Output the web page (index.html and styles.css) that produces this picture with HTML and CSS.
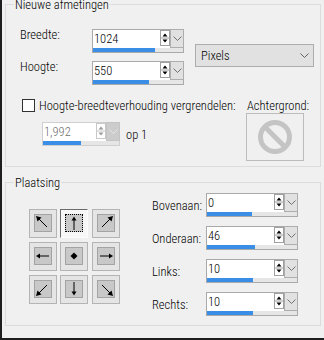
FILE: index.html
```html
<!DOCTYPE html>
<html>
<head>
<meta charset="utf-8">
<link rel="stylesheet" href="styles.css">
</head>
<body>
<div class="window">
  <div class="group g1">
    <span class="legend">Nieuwe afmetingen</span>
    <div class="dims">
      <div class="dimgrid">
        <span class="lbl">Breedte:</span>
        <div class="spin">
          <span class="val">1024</span>
          <span class="ud"><svg width="10" height="16" viewBox="0 0 10 16"><rect x=".5" y=".5" width="9" height="15" fill="#fff" stroke="#a0a0a0"/><path d="M1 8h8" stroke="#a0a0a0"/><path d="M2.5 6.5h5L5 3.5z M2.5 9.5h5L5 12.5z" fill="#000"/></svg></span>
          <span class="dd"><svg width="9" height="5" viewBox="0 0 9 5"><path d="M.5.5l4 4 4-4" fill="none" stroke="#707070"/></svg></span>
          <span class="track"><span class="fill" style="width:62px"></span></span>
        </div>
        <span class="lbl">Hoogte:</span>
        <div class="spin">
          <span class="val">550</span>
          <span class="ud"><svg width="10" height="16" viewBox="0 0 10 16"><rect x=".5" y=".5" width="9" height="15" fill="#fff" stroke="#a0a0a0"/><path d="M1 8h8" stroke="#a0a0a0"/><path d="M2.5 6.5h5L5 3.5z M2.5 9.5h5L5 12.5z" fill="#000"/></svg></span>
          <span class="dd"><svg width="9" height="5" viewBox="0 0 9 5"><path d="M.5.5l4 4 4-4" fill="none" stroke="#707070"/></svg></span>
          <span class="track"><span class="fill" style="width:56px"></span></span>
        </div>
      </div>
      <div class="select"><span>Pixels</span><svg width="9" height="5" viewBox="0 0 9 5"><path d="M.5.5l4 4 4-4" fill="none" stroke="#606060"/></svg></div>
    </div>
    <div class="lower">
      <div class="lock">
        <div class="check"><span class="box"></span><span>Hoogte-breedteverhouding vergrendelen:</span></div>
        <div class="ratio">
          <div class="spin small disabled">
            <span class="val">1,992</span>
            <span class="ud"><svg width="10" height="16" viewBox="0 0 10 16"><rect x=".5" y=".5" width="9" height="15" fill="#fff" stroke="#c8c8c8"/><path d="M1 8h8" stroke="#c8c8c8"/><path d="M2.5 6.5h5L5 3.5z M2.5 9.5h5L5 12.5z" fill="#9a9a9a"/></svg></span>
            <span class="dd"><svg width="9" height="5" viewBox="0 0 9 5"><path d="M.5.5l4 4 4-4" fill="none" stroke="#e6e6e6"/></svg></span>
            <span class="track"><span class="fill" style="width:38px"></span></span>
          </div>
          <span class="op">op 1</span>
        </div>
      </div>
      <div class="bg">
        <span class="bglbl">Achtergrond:</span>
        <div class="bgbox"><svg width="36" height="36" viewBox="0 0 36 36"><circle cx="18" cy="18" r="14.5" fill="none" stroke="#c4c4c4" stroke-width="5"/><path d="M8 8L28 28" stroke="#c4c4c4" stroke-width="5"/></svg></div>
      </div>
    </div>
  </div>

  <div class="group g2">
    <span class="legend">Plaatsing</span>
    <div class="place">
      <div class="anchors">
        <div class="anc"><span class="sq"><svg width="16" height="16" viewBox="0 0 16 16"><path d="M12 12L3 3" stroke="#000"/><path d="M1 1L6.5 2.5L2.5 6.5z" fill="#000"/></svg></span></div>
        <div class="anc sel"><span class="sq"><svg width="16" height="16" viewBox="0 0 16 16"><path d="M8 15V4" stroke="#000"/><path d="M8 1.5L10.5 5.5H5.5z" fill="#000"/></svg></span></div>
        <div class="anc"><span class="sq"><svg width="16" height="16" viewBox="0 0 16 16"><path d="M4 12L13 3" stroke="#000"/><path d="M15 1L13.5 6.5L9.5 2.5z" fill="#000"/></svg></span></div>
        <div class="anc"><span class="sq"><svg width="16" height="16" viewBox="0 0 16 16"><path d="M14 8H4" stroke="#000"/><path d="M1 8L5 5.5V10.5z" fill="#000"/></svg></span></div>
        <div class="anc"><span class="sq"><svg width="16" height="16" viewBox="0 0 16 16"><path d="M8 4.5L11.5 8L8 11.5L4.5 8z" fill="#000"/></svg></span></div>
        <div class="anc"><span class="sq"><svg width="16" height="16" viewBox="0 0 16 16"><path d="M2 8H12" stroke="#000"/><path d="M15 8L11 5.5V10.5z" fill="#000"/></svg></span></div>
        <div class="anc"><span class="sq"><svg width="16" height="16" viewBox="0 0 16 16"><path d="M12 4L3 13" stroke="#000"/><path d="M1 15L2.5 9.5L6.5 13.5z" fill="#000"/></svg></span></div>
        <div class="anc"><span class="sq"><svg width="16" height="16" viewBox="0 0 16 16"><path d="M8 1V12" stroke="#000"/><path d="M8 14.5L10.5 10.5H5.5z" fill="#000"/></svg></span></div>
        <div class="anc"><span class="sq"><svg width="16" height="16" viewBox="0 0 16 16"><path d="M4 4L13 13" stroke="#000"/><path d="M15 15L9.5 13.5L13.5 9.5z" fill="#000"/></svg></span></div>
      </div>
      <div class="offsets">
        <span class="olbl">Bovenaan:</span>
        <div class="spin">
          <span class="val">0</span>
          <span class="ud"><svg width="10" height="16" viewBox="0 0 10 16"><rect x=".5" y=".5" width="9" height="15" fill="#fff" stroke="#a0a0a0"/><path d="M1 8h8" stroke="#a0a0a0"/><path d="M2.5 6.5h5L5 3.5z M2.5 9.5h5L5 12.5z" fill="#000"/></svg></span>
          <span class="dd"><svg width="9" height="5" viewBox="0 0 9 5"><path d="M.5.5l4 4 4-4" fill="none" stroke="#707070"/></svg></span>
          <span class="track"><span class="fill" style="width:45px"></span></span>
        </div>
        <span class="olbl">Onderaan:</span>
        <div class="spin">
          <span class="val">46</span>
          <span class="ud"><svg width="10" height="16" viewBox="0 0 10 16"><rect x=".5" y=".5" width="9" height="15" fill="#fff" stroke="#a0a0a0"/><path d="M1 8h8" stroke="#a0a0a0"/><path d="M2.5 6.5h5L5 3.5z M2.5 9.5h5L5 12.5z" fill="#000"/></svg></span>
          <span class="dd"><svg width="9" height="5" viewBox="0 0 9 5"><path d="M.5.5l4 4 4-4" fill="none" stroke="#707070"/></svg></span>
          <span class="track"><span class="fill" style="width:48px"></span></span>
        </div>
        <span class="olbl">Links:</span>
        <div class="spin">
          <span class="val">10</span>
          <span class="ud"><svg width="10" height="16" viewBox="0 0 10 16"><rect x=".5" y=".5" width="9" height="15" fill="#fff" stroke="#a0a0a0"/><path d="M1 8h8" stroke="#a0a0a0"/><path d="M2.5 6.5h5L5 3.5z M2.5 9.5h5L5 12.5z" fill="#000"/></svg></span>
          <span class="dd"><svg width="9" height="5" viewBox="0 0 9 5"><path d="M.5.5l4 4 4-4" fill="none" stroke="#707070"/></svg></span>
          <span class="track"><span class="fill" style="width:46px"></span></span>
        </div>
        <span class="olbl">Rechts:</span>
        <div class="spin">
          <span class="val">10</span>
          <span class="ud"><svg width="10" height="16" viewBox="0 0 10 16"><rect x=".5" y=".5" width="9" height="15" fill="#fff" stroke="#a0a0a0"/><path d="M1 8h8" stroke="#a0a0a0"/><path d="M2.5 6.5h5L5 3.5z M2.5 9.5h5L5 12.5z" fill="#000"/></svg></span>
          <span class="dd"><svg width="9" height="5" viewBox="0 0 9 5"><path d="M.5.5l4 4 4-4" fill="none" stroke="#707070"/></svg></span>
          <span class="track"><span class="fill" style="width:46px"></span></span>
        </div>
      </div>
    </div>
  </div>
</div>
</body>
</html>
```
FILE: styles.css
```css
html, body {
  margin: 0;
  padding: 0;
  background: #f0f0f0;
}
body {
  font-family: Roboto, "Liberation Sans", sans-serif;
  font-stretch: 75%;
  font-weight: 300;
  font-size: 12.5px;
  line-height: 15px;
  color: #000;
}
.window {
  width: 324px;
  height: 340px;
  box-sizing: border-box;
  border-left: 2px solid #1e1e1e;
  border-bottom: 2px solid #1e1e1e;
  padding: 4px 0 0 3px;
  overflow: hidden;
}
.group {
  position: relative;
  width: 316px;
  box-sizing: border-box;
  border: 1px solid #dcdcdc;
}
.legend {
  position: absolute;
  left: 8px;
  top: -8px;
  padding: 0 1px;
  background: #f0f0f0;
}
.g1 {
  height: 163px;
  padding: 24px 0 0 14px;
}
.g2 {
  margin-top: 15px;
  height: 144px;
  padding: 10px 0 0 14px;
}

/* dimensions */
.dims {
  display: flex;
  align-items: flex-start;
}
.dimgrid {
  display: grid;
  grid-template-columns: 72px 92px;
  grid-template-rows: 24px 24px;
  row-gap: 8px;
}
.lbl {
  margin-top: -2px;
}
.select {
  margin: 15px 0 0 11px;
  width: 119px;
  height: 23px;
  box-sizing: border-box;
  border: 1px solid #adadad;
  background: #e1e1e1;
  display: flex;
  align-items: center;
  justify-content: space-between;
  padding: 0 4px 0 5px;
}

/* spin control */
.spin {
  width: 92px;
  height: 24px;
  box-sizing: border-box;
  border: 1px solid #a9a9a9;
  background: #fff;
  display: grid;
  grid-template-columns: 1fr 10px 13px;
  grid-template-rows: 18px 4px;
}
.spin.small {
  width: 78px;
}
.val {
  padding-left: 1px;
  line-height: 17px;
  overflow: hidden;
}
.ud {
  display: block;
  height: 16px;
}
.ud svg, .dd svg, .sq svg {
  display: block;
}
.dd {
  margin: -1px -1px 0 0;
  border: 1px solid #adadad;
  background: #e1e1e1;
  display: flex;
  align-items: center;
  justify-content: center;
}
.track {
  grid-column: 1 / -1;
  background: #e6e6e6;
  display: block;
}
.fill {
  display: block;
  height: 4px;
  background: #3a8ee6;
}
.spin.disabled {
  border-color: #cfcfcf;
}
.spin.disabled .val {
  color: #6d6d6d;
}
.spin.disabled .dd {
  background: #cccccc;
  border-color: #c4c4c4;
}

/* lower part */
.lower {
  display: flex;
  margin-top: 13px;
}
.lock {
  width: 226px;
  flex: none;
}
.check {
  display: flex;
  align-items: center;
  margin-left: 2px;
  white-space: nowrap;
}
.box {
  width: 13px;
  height: 13px;
  box-sizing: border-box;
  border: 1px solid #333;
  background: #fff;
  margin-right: 4px;
  flex: none;
}
.ratio {
  display: flex;
  align-items: center;
  margin: 9px 0 0 22px;
}
.op {
  margin-left: 6px;
}
.bg {
  display: flex;
  flex-direction: column;
  margin-top: 1px;
}
.bglbl {
  padding-left: 1px;
  line-height: 14px;
}
.bgbox {
  width: 58px;
  height: 48px;
  box-sizing: border-box;
  border: 1px solid #bcbcbc;
  display: flex;
  align-items: center;
  justify-content: center;
}

/* placement */
.place {
  display: flex;
  align-items: flex-start;
}
.anchors {
  margin: 16px 0 0 9px;
  display: grid;
  grid-template-columns: 31px 32px 28px;
  grid-template-rows: 29px 29px 29px;
  row-gap: 4px;
}
.anc {
  width: 28px;
  height: 29px;
  box-sizing: border-box;
  border: 1px solid #b4b4b4;
  background: #e5e5e5;
}
.sq {
  display: block;
  width: 18px;
  height: 18px;
  box-sizing: border-box;
  margin: 4px 0 0 4px;
  border: 1px solid #a3a3a3;
  background: #c8c8c8;
}
.anc.sel {
  border-color: #6b6b6b #fcfcfc #fcfcfc #6b6b6b;
  background: #f7f7f7;
}
.anc.sel .sq {
  border: 1px dotted #000;
}
.offsets {
  margin-left: 32px;
  display: grid;
  grid-template-columns: 54px 92px;
  grid-auto-rows: 24px;
  row-gap: 9px;
  align-items: center;
}
```
